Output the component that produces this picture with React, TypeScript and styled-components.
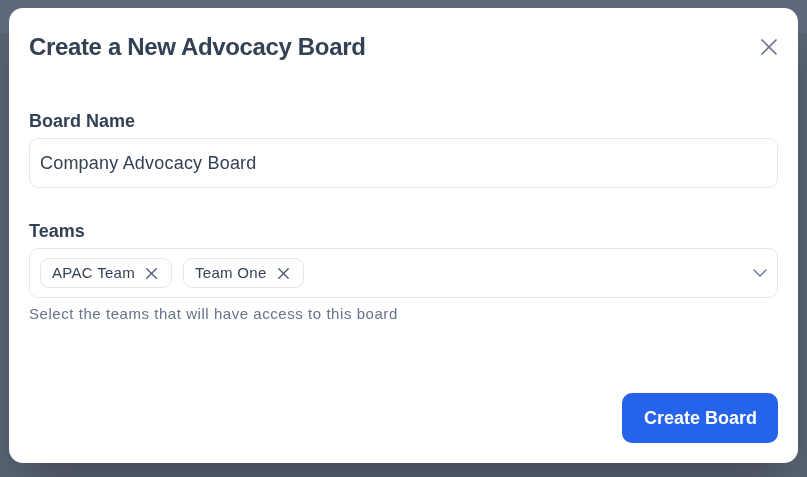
import React from "react";
import styled, { createGlobalStyle } from "styled-components";

const Global = createGlobalStyle`
  * { box-sizing: border-box; }
  html, body { margin: 0; padding: 0; }
  body {
    font-family: "Liberation Sans", Arial, Helvetica, sans-serif;
    background: #5b6576;
  }
`;

const Underlay = styled.div`
  height: 477px;
  background: #5a6474;
`;

const UnderBar = styled.div`
  height: 35px;
  background: #5e6a7b;
  border-bottom: 1px solid #566071;
`;

const Overlay = styled.div`
  position: fixed;
  inset: 0;
  padding: 8px 9px;
  display: flex;
  align-items: flex-start;
  justify-content: center;
`;

const Modal = styled.div`
  width: 789px;
  background: #ffffff;
  border-radius: 14px;
  box-shadow: 0 25px 50px -12px rgba(0, 0, 0, 0.3);
  padding: 20px;
  display: flex;
  flex-direction: column;
`;

const Header = styled.div`
  display: flex;
  align-items: center;
  justify-content: space-between;
  height: 38px;
`;

const Title = styled.h2`
  margin: 0;
  font-size: 24px;
  line-height: 40px;
  font-weight: 700;
  color: #334155;
  letter-spacing: -0.35px;
`;

const CloseButton = styled.button`
  border: 0;
  background: none;
  padding: 0;
  width: 28px;
  height: 28px;
  display: flex;
  align-items: center;
  justify-content: center;
  color: #64748b;
  margin-right: -5px;
  cursor: pointer;
`;

const Field = styled.div<{ $top: number }>`
  display: flex;
  flex-direction: column;
  margin-top: ${(p) => p.$top}px;
`;

const Label = styled.label`
  font-size: 18px;
  line-height: 24px;
  font-weight: 700;
  color: #334155;
  margin-bottom: 5px;
`;

const TextInput = styled.input`
  height: 50px;
  border: 1px solid #e2e8f0;
  border-radius: 9px;
  padding: 0 10px;
  font-family: inherit;
  font-size: 18px;
  letter-spacing: 0.2px;
  color: #334155;
  outline: none;
  background: #fff;
`;

const SelectBox = styled.div`
  height: 50px;
  border: 1px solid #e2e8f0;
  border-radius: 9px;
  padding: 0 10px;
  display: flex;
  align-items: center;
  gap: 11px;
`;

const Chip = styled.span`
  display: inline-flex;
  align-items: center;
  gap: 7px;
  height: 30px;
  padding: 0 10px 0 11px;
  border: 1px solid #e2e8f0;
  border-radius: 9px;
  font-size: 15px;
  letter-spacing: 0.3px;
  color: #334155;
  line-height: 20px;
`;

const ChipRemove = styled.span`
  display: inline-flex;
  color: #475569;
`;

const Spacer = styled.div`
  flex: 1;
`;

const Chevron = styled.span`
  display: inline-flex;
  color: #64748b;
  margin-right: -5px;
`;

const Help = styled.p`
  margin: 6px 0 0;
  font-size: 15px;
  line-height: 20px;
  letter-spacing: 0.55px;
  color: #64748b;
`;

const Footer = styled.div`
  display: flex;
  justify-content: flex-end;
  margin-top: 69px;
`;

const PrimaryButton = styled.button`
  height: 50px;
  padding: 0 21px 0 22px;
  border: 0;
  border-radius: 10px;
  background: #2563eb;
  color: #fff;
  font-family: inherit;
  font-size: 18px;
  font-weight: 700;
  cursor: pointer;
`;

const XIcon = ({ size, sw }: { size: number; sw: number }) => (
  <svg width={size} height={size} viewBox="0 0 24 24" fill="none" stroke="currentColor" strokeWidth={sw} strokeLinecap="round">
    <path d="M18 6 6 18" />
    <path d="M6 6l12 12" />
  </svg>
);

const teams = ["APAC Team", "Team One"];

export default function App() {
  return (
    <>
      <Global />
      <Underlay>
        <UnderBar />
      </Underlay>
      <Overlay>
        <Modal>
          <Header>
            <Title>Create a New Advocacy Board</Title>
            <CloseButton aria-label="Close">
              <XIcon size={28} sw={1.5} />
            </CloseButton>
          </Header>
          <Field $top={43}>
            <Label>Board Name</Label>
            <TextInput defaultValue="Company Advocacy Board" />
          </Field>
          <Field $top={31}>
            <Label>Teams</Label>
            <SelectBox>
              {teams.map((t) => (
                <Chip key={t}>
                  {t}
                  <ChipRemove>
                    <XIcon size={19} sw={1.6} />
                  </ChipRemove>
                </Chip>
              ))}
              <Spacer />
              <Chevron>
                <svg width="24" height="24" viewBox="0 0 24 24" fill="none" stroke="currentColor" strokeWidth={1.4} strokeLinecap="round" strokeLinejoin="round">
                  <path d="m6 9 6 6 6-6" />
                </svg>
              </Chevron>
            </SelectBox>
            <Help>Select the teams that will have access to this board</Help>
          </Field>
          <Footer>
            <PrimaryButton>Create Board</PrimaryButton>
          </Footer>
        </Modal>
      </Overlay>
    </>
  );
}
